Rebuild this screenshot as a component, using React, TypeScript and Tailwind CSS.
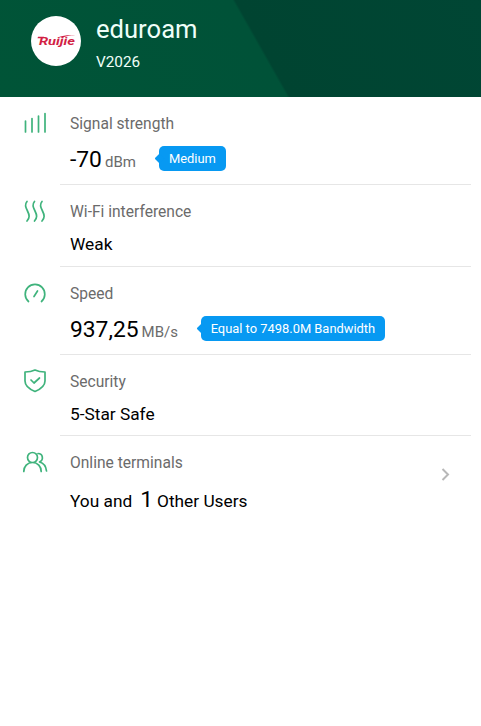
import type { ReactNode } from "react";

type RowProps = {
  icon: ReactNode;
  label: string;
  className: string;
  children: ReactNode;
  arrow?: boolean;
};

function Row({ icon, label, className, children, arrow }: RowProps) {
  return (
    <div className={`flex ${className}`}>
      <div className="w-[60px] shrink-0 pt-3 pl-5">
        <svg
          width="30"
          height="30"
          viewBox="0 0 30 30"
          fill="none"
          stroke="#3fb37c"
          strokeWidth="1.7"
          strokeLinecap="round"
          strokeLinejoin="round"
        >
          {icon}
        </svg>
      </div>
      <div
        className={`mr-2.5 flex flex-1 justify-between pl-2.5 ${
          arrow ? "" : "border-b border-[#e6e6e6]"
        }`}
      >
        <div>
          <div className="mt-[17px] h-5 text-[15.6px] leading-[21px] text-[#6b6b6b]">
            {label}
          </div>
          {children}
        </div>
        {arrow && (
          <svg
            className="mt-[31px] mr-[18px]"
            width="14"
            height="16"
            viewBox="0 0 14 16"
            fill="none"
            stroke="#b8b8b8"
            strokeWidth="2"
          >
            <path d="M3.500 2 9 7.500 3.500 13" />
          </svg>
        )}
      </div>
    </div>
  );
}

function Tag({ children, className }: { children: ReactNode; className: string }) {
  return (
    <span
      className={`relative mb-1 flex h-[25px] items-center justify-center rounded-[5px] bg-[#0799f2] pt-px text-[12.9px] text-white ${className}`}
    >
      <span className="absolute top-[9px] -left-[2.5px] size-[7px] rotate-45 rounded-[1px] bg-[#0799f2]" />
      <span className="relative">{children}</span>
    </span>
  );
}

export default function App() {
  return (
    <div className="h-[726px] w-[481px] overflow-hidden bg-white font-['Roboto',sans-serif]">
      <header className="flex h-[97px] bg-[linear-gradient(60.5deg,#005437_0%,#005238_53.6%,#004431_54.1%,#004634_100%)] pl-[31px] text-[#effff8]">
        <div className="mt-4 flex size-[50px] items-center justify-center rounded-full bg-white">
          <svg width="42" height="20" viewBox="0 0 42 20" fill="#d21f45">
            <text
              x="4"
              y="13.5"
              textLength="36"
              lengthAdjust="spacingAndGlyphs"
              fontFamily="Roboto, sans-serif"
              fontSize="10.5"
              fontWeight="700"
              fontStyle="italic"
            >
              Ruijie
            </text>
            <path d="M3 5.800h6l-.6 1.500H2.500ZM24 6c4-1.600 9-2 16.500-1.600-6 0-10 .6-13 2.200Z" />
          </svg>
        </div>
        <div className="ml-[15px]">
          <h1 className="mt-[13px] text-[25.6px] leading-8">eduroam</h1>
          <p className="mt-[7px] text-[15.3px] leading-5">V2026</p>
        </div>
      </header>

      <Row
        label="Signal strength"
        className="h-[88px]"
        icon={<path d="M5.500 12v11M12 9.500V23M18.500 7V23M25 4.500V23" />}
      >
        <div className="mt-3 flex h-7 items-center">
          <span className="text-[22.8px]">-70</span>
          <span className="mt-1 ml-[3px] text-[15px] text-[#6b6b6b]">dBm</span>
          <Tag className="ml-[23px] w-[67px]">Medium</Tag>
        </div>
      </Row>

      <Row
        label="Wi-Fi interference"
        className="h-[82px]"
        icon={
          <path d="M7 4.500c-2.500 3-1.500 5.500.5 9.500s2.500 6.500-.5 10M14.500 4.500c-2.500 3-1.500 5.500.5 9.500s2.500 6.500-.5 10M22 4.500c-2.500 3-1.500 5.500.5 9.500s2.500 6.500-.5 10" />
        }
      >
        <div className="mt-[10px] text-[17.3px] leading-6">Weak</div>
      </Row>

      <Row
        label="Speed"
        className="h-[88px]"
        icon={<path d="M8.500 22.500a9.800 9.800 0 1 1 13 0M14 17.500l3.500-5.500" />}
      >
        <div className="mt-3 flex h-7 items-center">
          <span className="text-[22.8px]">937,25</span>
          <span className="mt-1 ml-[3px] text-[15px] text-[#6b6b6b]">MB/s</span>
          <Tag className="ml-[23px] w-[184px]">Equal to 7498.0M Bandwidth</Tag>
        </div>
      </Row>

      <Row
        label="Security"
        className="h-[81px]"
        icon={
          <path d="M15 3c3 1.500 6 2 10 2v9c0 5-4 8-10 10.500C9 22 5 19 5 14V5c4 0 7-.5 10-2ZM11 13l3 3 5.500-5" />
        }
      >
        <div className="mt-[10px] text-[17.3px] leading-6">5-Star Safe</div>
      </Row>

      <Row
        label="Online terminals"
        className="h-[90px]"
        arrow
        icon={
          <path d="M12.500 4.500a5 5 0 1 0 0 10 5 5 0 0 0 0-10ZM3.800 23.500c0-5 3.500-9 8.700-9s8.700 4 8.700 9M18 5.500c5 0 6 6.500 1.500 8.500 4 1 6.500 4.500 7 9" />
        }
      >
        <div className="mt-[13px] flex h-7 items-baseline text-[17.3px]">
          <span>You and</span>
          <span className="ml-2 text-[22.8px] leading-7">1</span>
          <span className="ml-1">Other Users</span>
        </div>
      </Row>
    </div>
  );
}
